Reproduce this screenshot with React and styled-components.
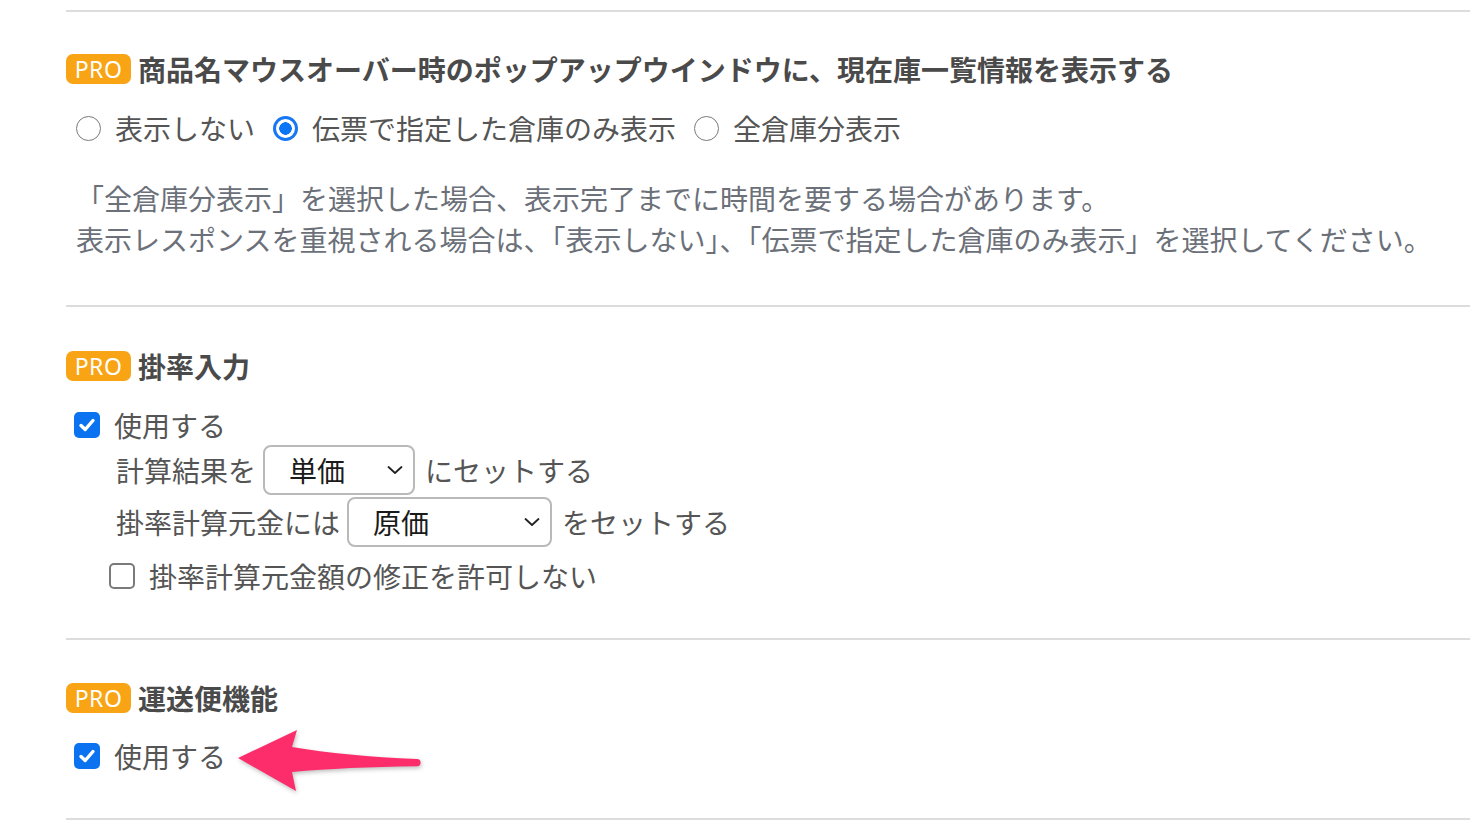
import React from 'react';
import styled, { createGlobalStyle } from 'styled-components';

const GlobalStyle = createGlobalStyle`
  body {
    margin: 0;
    background: #ffffff;
    font-family: "Noto Sans CJK JP", "Noto Sans", sans-serif;
    color: #555555;
  }
`;

const Page = styled.div`
  padding: 10px 0 0 66px;
`;

const Sections = styled.div`
  border-top: 2px solid #dcdcdc;
`;

const Section = styled.section`
  padding: ${(p) => p.$top}px 0 ${(p) => p.$bottom}px;
  border-bottom: 2px solid #dcdcdc;
`;

const Heading = styled.h2`
  display: flex;
  align-items: center;
  gap: 7px;
  height: 40px;
  margin: 0;
  font-size: 28px;
  font-weight: 700;
  color: #4a4a4a;
  line-height: 40px;
`;

const Badge = styled.span`
  display: inline-flex;
  align-items: center;
  justify-content: center;
  width: 65px;
  height: 30px;
  border-radius: 7px;
  background: #f8a414;
  color: #ffffff;
  font-family: "Noto Sans", "Liberation Sans", sans-serif;
  font-size: 23px;
  font-weight: 400;
  letter-spacing: 0.5px;
`;

const Row = styled.div`
  display: flex;
  align-items: center;
  height: ${(p) => p.$h || 40}px;
  margin-top: ${(p) => p.$mt || 0}px;
  padding-left: ${(p) => p.$indent || 0}px;
  font-size: 28px;
  line-height: 40px;
  color: #555555;
`;

const RadioOption = styled.label`
  display: flex;
  align-items: center;
  gap: 14px;
  margin-right: 18px;
`;

const Radio = styled.span`
  box-sizing: border-box;
  width: 25px;
  height: 25px;
  border-radius: 50%;
  border: ${(p) => (p.$checked ? '3px solid #1877f2' : '1.5px solid #7a7a7a')};
  background: ${(p) => (p.$checked ? 'radial-gradient(circle, #0a76f6 0 6px, #ffffff 6.5px)' : '#ffffff')};
`;

const Box = styled.span`
  box-sizing: border-box;
  display: inline-flex;
  align-items: center;
  justify-content: center;
  width: 26px;
  height: 26px;
  border-radius: 5px;
  margin-left: ${(p) => p.$ml}px;
  margin-right: 14px;
  background: ${(p) => (p.$checked ? '#0b73f0' : '#ffffff')};
  border: ${(p) => (p.$checked ? 'none' : '2px solid #7a7a7a')};
`;

const Note = styled.p`
  margin: 30px 0 0 10px;
  font-size: 28px;
  line-height: 41px;
  color: #6b7079;
`;

const Select = styled.div`
  box-sizing: border-box;
  display: flex;
  align-items: center;
  justify-content: space-between;
  width: ${(p) => p.$w}px;
  height: 50px;
  margin: 0 10px 0 7px;
  padding: 0 10px 0 24px;
  border: 2px solid #b9b9b9;
  border-radius: 8px;
  color: #1a1a1a;
  font-size: 28px;
`;

const Arrow = styled.svg`
  margin-left: 8px;
  margin-top: 8px;
  filter: drop-shadow(1px 2px 2px rgba(0, 0, 0, 0.25));
`;

const Check = () => (
  <svg width="18" height="18" viewBox="0 0 18 18">
    <path d="M3 9.5 L7.2 13.5 L15 4.5" fill="none" stroke="#fff" strokeWidth="3.4" strokeLinecap="round" strokeLinejoin="round" />
  </svg>
);

const Chevron = () => (
  <svg width="16" height="10" viewBox="0 0 16 10">
    <path d="M1.5 2 L8 8 L14.5 2" fill="none" stroke="#222" strokeWidth="1.8" strokeLinecap="round" strokeLinejoin="round" />
  </svg>
);

export default function App() {
  return (
    <Page>
      <GlobalStyle />
      <Sections>
        <Section $top={37} $bottom={45}>
          <Heading>
            <Badge>PRO</Badge>
            商品名マウスオーバー時のポップアップウインドウに、現在庫一覧情報を表示する
          </Heading>
          <Row $mt={19} $indent={10}>
            <RadioOption><Radio />表示しない</RadioOption>
            <RadioOption><Radio $checked />伝票で指定した倉庫のみ表示</RadioOption>
            <RadioOption><Radio />全倉庫分表示</RadioOption>
          </Row>
          <Note>
            「全倉庫分表示」を選択した場合、表示完了までに時間を要する場合があります。
            <br />
            表示レスポンスを重視される場合は、「表示しない」、「伝票で指定した倉庫のみ表示」を選択してください。
          </Note>
        </Section>

        <Section $top={39} $bottom={42}>
          <Heading>
            <Badge>PRO</Badge>
            掛率入力
          </Heading>
          <Row $mt={19}>
            <Box $checked $ml={8}><Check /></Box>
            使用する
          </Row>
          <Row $h={50} $indent={50}>
            計算結果を
            <Select $w={152}>単価<Chevron /></Select>
            にセットする
          </Row>
          <Row $h={50} $mt={2} $indent={50}>
            掛率計算元金には
            <Select $w={205}>原価<Chevron /></Select>
            をセットする
          </Row>
          <Row $mt={9}>
            <Box $ml={43} />
            掛率計算元金額の修正を許可しない
          </Row>
        </Section>

        <Section $top={38} $bottom={42}>
          <Heading>
            <Badge>PRO</Badge>
            運送便機能
          </Heading>
          <Row $mt={18}>
            <Box $checked $ml={8}><Check /></Box>
            使用する
            <Arrow width="192" height="70" viewBox="0 0 192 70">
              <path
                d="M4 33 L63 5 L58 22 Q112 31 183 34 A3.6 3.6 0 0 1 183 41.2 Q112 42 58 47 L62 66 Z"
                fill="#fd2d6b"
              />
            </Arrow>
          </Row>
        </Section>
      </Sections>
    </Page>
  );
}
